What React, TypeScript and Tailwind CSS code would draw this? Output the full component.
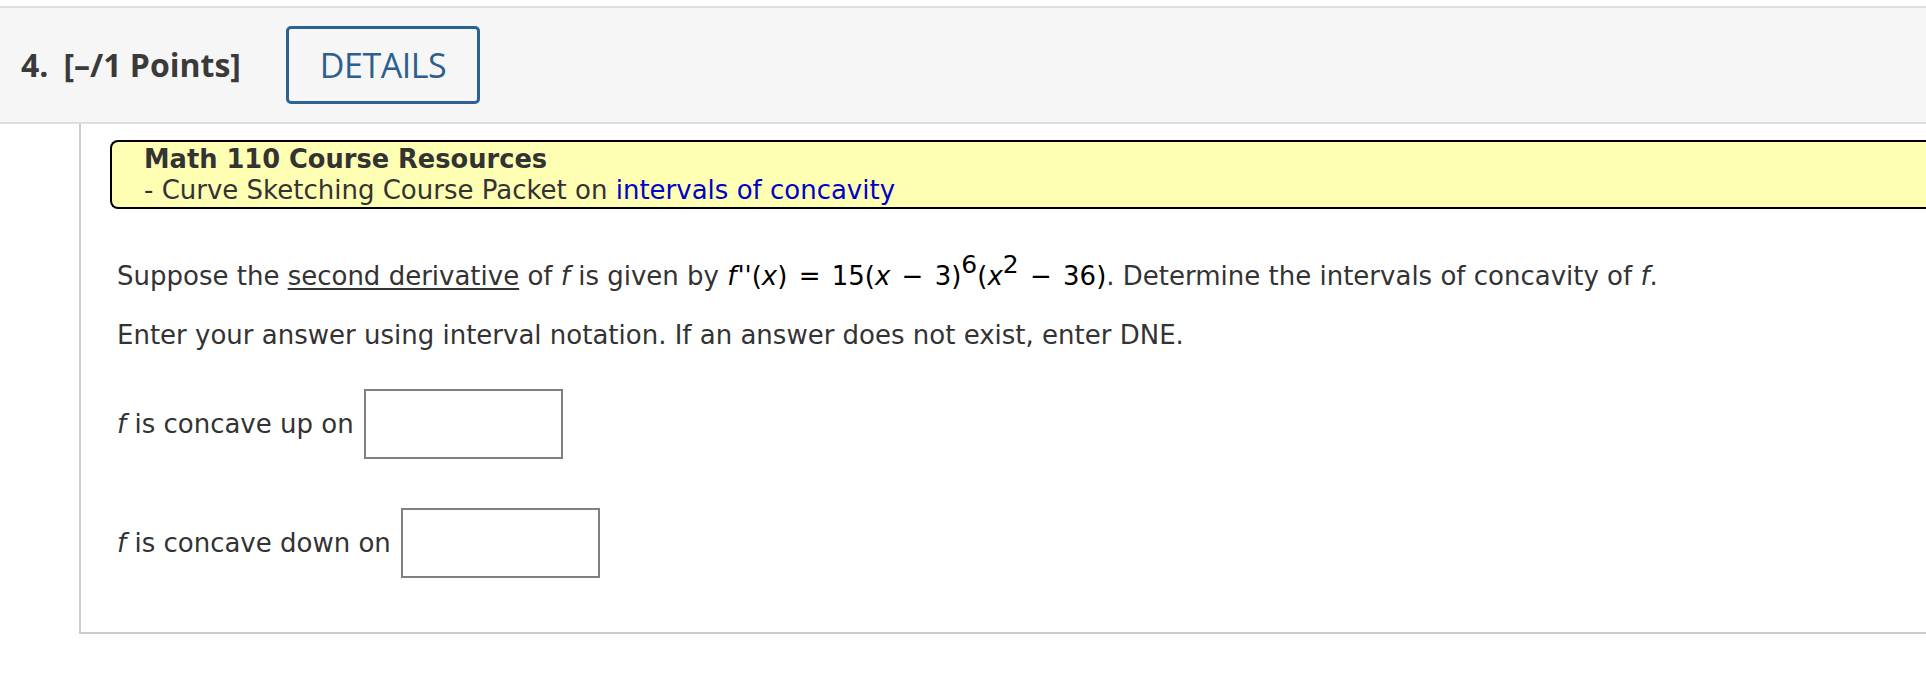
export default function App() {
  const body = { fontFamily: '"DejaVu Sans", Verdana, sans-serif' };
  const open = { fontFamily: '"Open Sans", sans-serif' };
  return (
    <div className="w-full h-[680px] bg-white pt-[6px]" style={body}>
      <div className="h-[118px] bg-[#f6f6f6] border-y-2 border-[#dedede] flex items-center pl-[21px]">
        <div className="text-[32px] font-bold text-[#3a3a3a] flex gap-[15px]" style={open}>
          <span>4.</span>
          <span>[–/1 Points]</span>
        </div>
        <button
          className="ml-[45px] w-[194px] h-[78px] border-[3px] border-[#2c6193] rounded-[5px] text-[#2c5f8f] text-[34px] tracking-[-0.5px]"
          style={open}
        >
          DETAILS
        </button>
      </div>

      <div className="ml-[79px] h-[510px] border-l-2 border-b-2 border-[#cccccc] pt-[16px]">
        <div className="ml-[29px] h-[69px] bg-[#ffffb3] border-2 border-r-0 border-black rounded-l-[8px] pl-[32px] flex flex-col justify-center text-[26px] leading-[31px] text-[#333]">
          <div className="font-bold text-[25.7px]">Math 110 Course Resources</div>
          <div>
            - Curve Sketching Course Packet on{' '}
            <span className="text-[#0000cc]">intervals of concavity</span>
          </div>
        </div>

        <div className="pl-[36px] text-[26px] text-[#333]">
          <p className="mt-[51px] leading-[32px]">
            Suppose the <span className="underline underline-offset-[3px]">second derivative</span> of{' '}
            <i>f</i> is given by{' '}
            <span className="text-black">
              <i>f</i>
              <span className="ml-[1px]">''</span>(<i>x</i>)<span className="px-[3px]"> = </span>15(<i>x</i>
              <span className="px-[3px]"> − </span>3)<sup className="text-[25px]">6</sup>(<i>x</i>
              <sup className="text-[25px]">2</sup>
              <span className="px-[3px]"> − </span>36)
            </span>
            . Determine the intervals of concavity of <i>f</i>.
          </p>
          <p className="mt-[27px] leading-[32px]">
            Enter your answer using interval notation. If an answer does not exist, enter DNE.
          </p>

          <div className="mt-[38px] flex items-center gap-[10px]">
            <span>
              <i>f</i> is concave up on
            </span>
            <input className="w-[199px] h-[70px] border-2 border-[#808080] bg-white" />
          </div>
          <div className="mt-[49px] flex items-center gap-[10px]">
            <span>
              <i>f</i> is concave down on
            </span>
            <input className="w-[199px] h-[70px] border-2 border-[#808080] bg-white" />
          </div>
        </div>
      </div>
    </div>
  );
}
